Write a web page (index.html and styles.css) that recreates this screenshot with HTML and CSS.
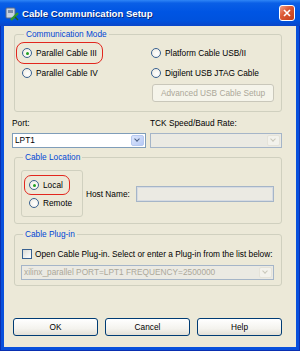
FILE: index.html
```html
<!DOCTYPE html>
<html>
   <head>
      <meta charset="UTF-8">
      <title>Cable Communication Setup</title>
      <link rel="stylesheet" href="styles.css">
   </head>
   <body>
      <div class="window">
         <div class="titlebar">
            <svg class="app-icon" width="14" height="14" viewBox="0 0 14 14">
               <rect x="1" y="1" width="9" height="10" rx="1" fill="#c9d3e0" stroke="#5a6b86"/>
               <rect x="3" y="3" width="5" height="3" fill="#7c8ea8"/>
               <path d="M6 13 L13 6" stroke="#2f9a2a" stroke-width="2.4"/>
               <path d="M10 10 L13 13" stroke="#1f5f1c" stroke-width="1.4"/>
            </svg>
            <span class="title">Cable Communication Setup</span>
            <span class="close">
               <svg width="8" height="8" viewBox="0 0 8 8"><path d="M1 1 L7 7 M7 1 L1 7" stroke="#fff" stroke-width="1.6"/></svg>
            </span>
         </div>
         <div class="frame">
            <div class="client">
               <fieldset class="group mode">
                  <legend>Communication Mode</legend>
                  <div class="mode-grid">
                     <label class="radio mark"><span class="dot on"></span>Parallel Cable III</label>
                     <label class="radio"><span class="dot"></span>Platform Cable USB/II</label>
                     <label class="radio"><span class="dot"></span>Parallel Cable IV</label>
                     <label class="radio"><span class="dot"></span>Digilent USB JTAG Cable</label>
                     <span></span>
                     <button class="btn adv" disabled>Advanced USB Cable Setup</button>
                  </div>
               </fieldset>

               <div class="ports">
                  <div class="field port">
                     <span class="lbl">Port:</span>
                     <div class="combo"><span class="val">LPT1</span><span class="arrow"></span></div>
                  </div>
                  <div class="field speed">
                     <span class="lbl">TCK Speed/Baud Rate:</span>
                     <div class="combo off"><span class="val"></span><span class="arrow"></span></div>
                  </div>
               </div>

               <fieldset class="group location">
                  <legend>Cable Location</legend>
                  <div class="loc-row">
                     <div class="loc-box">
                        <label class="radio mark small"><span class="dot on"></span>Local</label>
                        <label class="radio"><span class="dot"></span>Remote</label>
                     </div>
                     <span class="host-lbl">Host Name:</span>
                     <div class="textbox off"></div>
                  </div>
               </fieldset>

               <fieldset class="group plugin">
                  <legend>Cable Plug-in</legend>
                  <label class="check"><span class="box"></span>Open Cable Plug-in. Select or enter a Plug-in from the list below:</label>
                  <div class="combo off wide"><span class="val">xilinx_parallel PORT=LPT1 FREQUENCY=2500000</span><span class="arrow"></span></div>
               </fieldset>

               <div class="actions">
                  <button class="btn">OK</button>
                  <button class="btn">Cancel</button>
                  <button class="btn">Help</button>
               </div>
            </div>
         </div>
      </div>
   </body>
</html>
```

FILE: styles.css
```css
*
{
   box-sizing: border-box;
}

body
{
   margin: 0;
   font-family: "Liberation Sans", Arial, sans-serif;
   font-size: 8.3px;
   color: #000000;
   background: #0850dc;
}

.window
{
   width: 300px;
   height: 351px;
   display: flex;
   flex-direction: column;
}

/* title bar */
.titlebar
{
   height: 26px;
   display: flex;
   align-items: center;
   padding: 0 5px 0 4px;
   background: linear-gradient(#2f86f6 0%, #0a5fe6 12%, #0055e3 45%, #0052dd 80%, #0a46c8 100%);
}

.app-icon
{
   margin: 1px 3px 0 1px;
}

.title
{
   flex: 1;
   color: #ffffff;
   font-weight: bold;
   font-size: 9.6px;
   text-shadow: 1px 1px 0 #0a2a7a;
}

.close
{
   width: 16px;
   height: 16px;
   display: flex;
   align-items: center;
   justify-content: center;
   border: 1px solid #ffffff;
   border-radius: 3px;
   background: linear-gradient(135deg, #f0a08a 0%, #dc5a36 40%, #c43d18 100%);
}

/* frame and client */
.frame
{
   flex: 1;
   padding: 0 4px 4px;
   background: #0850dc;
   box-shadow: inset 1px 0 0 #0a2fb0, inset -1px 0 0 #0a2fb0, inset 0 -1px 0 #0a2fb0;
}

.client
{
   height: 100%;
   padding: 3px 14px 0 8px;
   background: #ece9d8;
}

.group
{
   margin: 0 0 0 2px;
   border: 1px solid #d0d0bf;
   border-radius: 3px;
   min-width: 0;
}

.group legend
{
   padding: 0 2px;
   margin-left: 2px;
   color: #0046d5;
   line-height: 10px;
}

/* radios and checkbox */
.radio
{
   display: flex;
   align-items: center;
   justify-self: start;
   gap: 4px;
   height: 10px;
   white-space: nowrap;
}

.dot
{
   width: 10px;
   height: 10px;
   flex: none;
   border-radius: 50%;
   border: 1px solid #3a6291;
   background: radial-gradient(circle at 60% 60%, #ffffff 0%, #ece9de 100%);
   display: flex;
   align-items: center;
   justify-content: center;
}

.dot.on::after
{
   content: "";
   width: 3px;
   height: 3px;
   border-radius: 50%;
   background: #21a121;
}

.mark
{
   outline: 1.5px solid #e2271e;
   outline-offset: 5px;
   border-radius: 2px;
}

.mark.small
{
   outline-offset: 4px;
   padding-right: 2px;
}

.check
{
   display: flex;
   align-items: center;
   gap: 3px;
   height: 11px;
   margin-left: 1px;
   white-space: nowrap;
}

.box
{
   width: 10px;
   height: 10px;
   flex: none;
   border: 1px solid #3a6291;
   background: linear-gradient(135deg, #dcdcd6, #ffffff);
}

/* communication mode */
.mode
{
   padding: 9px 9px 5px 7px;
}

.mode-grid
{
   display: grid;
   grid-template-columns: 129px 1fr;
   grid-template-rows: 10px 10px 18px;
   row-gap: 10px;
}

.adv
{
   margin: -4px 0 0 1px;
   width: 122px;
}

/* buttons */
.btn
{
   height: 18px;
   padding: 0;
   font: inherit;
   color: #000000;
   border: 1px solid #003c74;
   border-radius: 3px;
   background: linear-gradient(#ffffff 0%, #f4f3ee 60%, #e3e0d6 100%);
}

.btn:disabled
{
   color: #aca899;
   border-color: #c9c7ba;
   background: #f5f4ea;
}

/* port and speed */
.ports
{
   display: flex;
   gap: 4px;
   margin-top: 6px;
}

.field
{
   display: flex;
   flex-direction: column;
   gap: 5px;
}

.lbl
{
   line-height: 10px;
}

.port
{
   width: 134px;
}

.speed
{
   flex: 1;
}

.combo
{
   height: 15px;
   display: flex;
   align-items: stretch;
   border: 1px solid #7f9db9;
   background: #ffffff;
}

.combo .val
{
   flex: 1;
   padding-left: 2px;
   line-height: 13px;
   white-space: nowrap;
   overflow: hidden;
}

.combo .arrow
{
   width: 13px;
   margin: 1px;
   border: 1px solid #b7c9f0;
   border-radius: 2px;
   background: linear-gradient(135deg, #dde7fc, #b6c9f5);
   position: relative;
}

.combo .arrow::after
{
   content: "";
   position: absolute;
   left: 3px;
   top: 1px;
   width: 3px;
   height: 3px;
   border-right: 1.5px solid #4d6185;
   border-bottom: 1.5px solid #4d6185;
   transform: rotate(45deg);
}

.combo.off
{
   background: #ebeae3;
   border-color: #a5b5c8;
}

.combo.off .val
{
   color: #aca899;
}

.combo.off .arrow
{
   border-color: #e5e3da;
   background: #f3f2ec;
}

.combo.off .arrow::after
{
   border-color: #c9c7ba;
}

/* cable location */
.location
{
   margin-top: 4px;
   padding: 8px 7px 6px 6px;
}

.loc-row
{
   display: flex;
   align-items: center;
}

.loc-box
{
   width: 62px;
   display: flex;
   flex-direction: column;
   align-items: flex-start;
   gap: 8px;
   padding: 9px 0 8px 7px;
   border: 1px solid #d0d0bf;
   border-radius: 3px;
}

.host-lbl
{
   margin: 0 6px 0 3px;
}

.textbox
{
   flex: 1;
   height: 16px;
   border: 1px solid #a5b5c8;
   box-shadow: inset 0 0 0 1px #d6dbe2;
}

.textbox.off
{
   background: #ebeae3;
}

/* cable plug-in */
.plugin
{
   margin-top: 5px;
   padding: 9px 7px 5px 6px;
}

.wide
{
   margin-top: 6px;
}

/* bottom buttons */
.actions
{
   display: flex;
   gap: 7px;
   margin-top: 32px;
   padding-left: 1px;
}

.actions .btn
{
   width: 85px;
}
```
